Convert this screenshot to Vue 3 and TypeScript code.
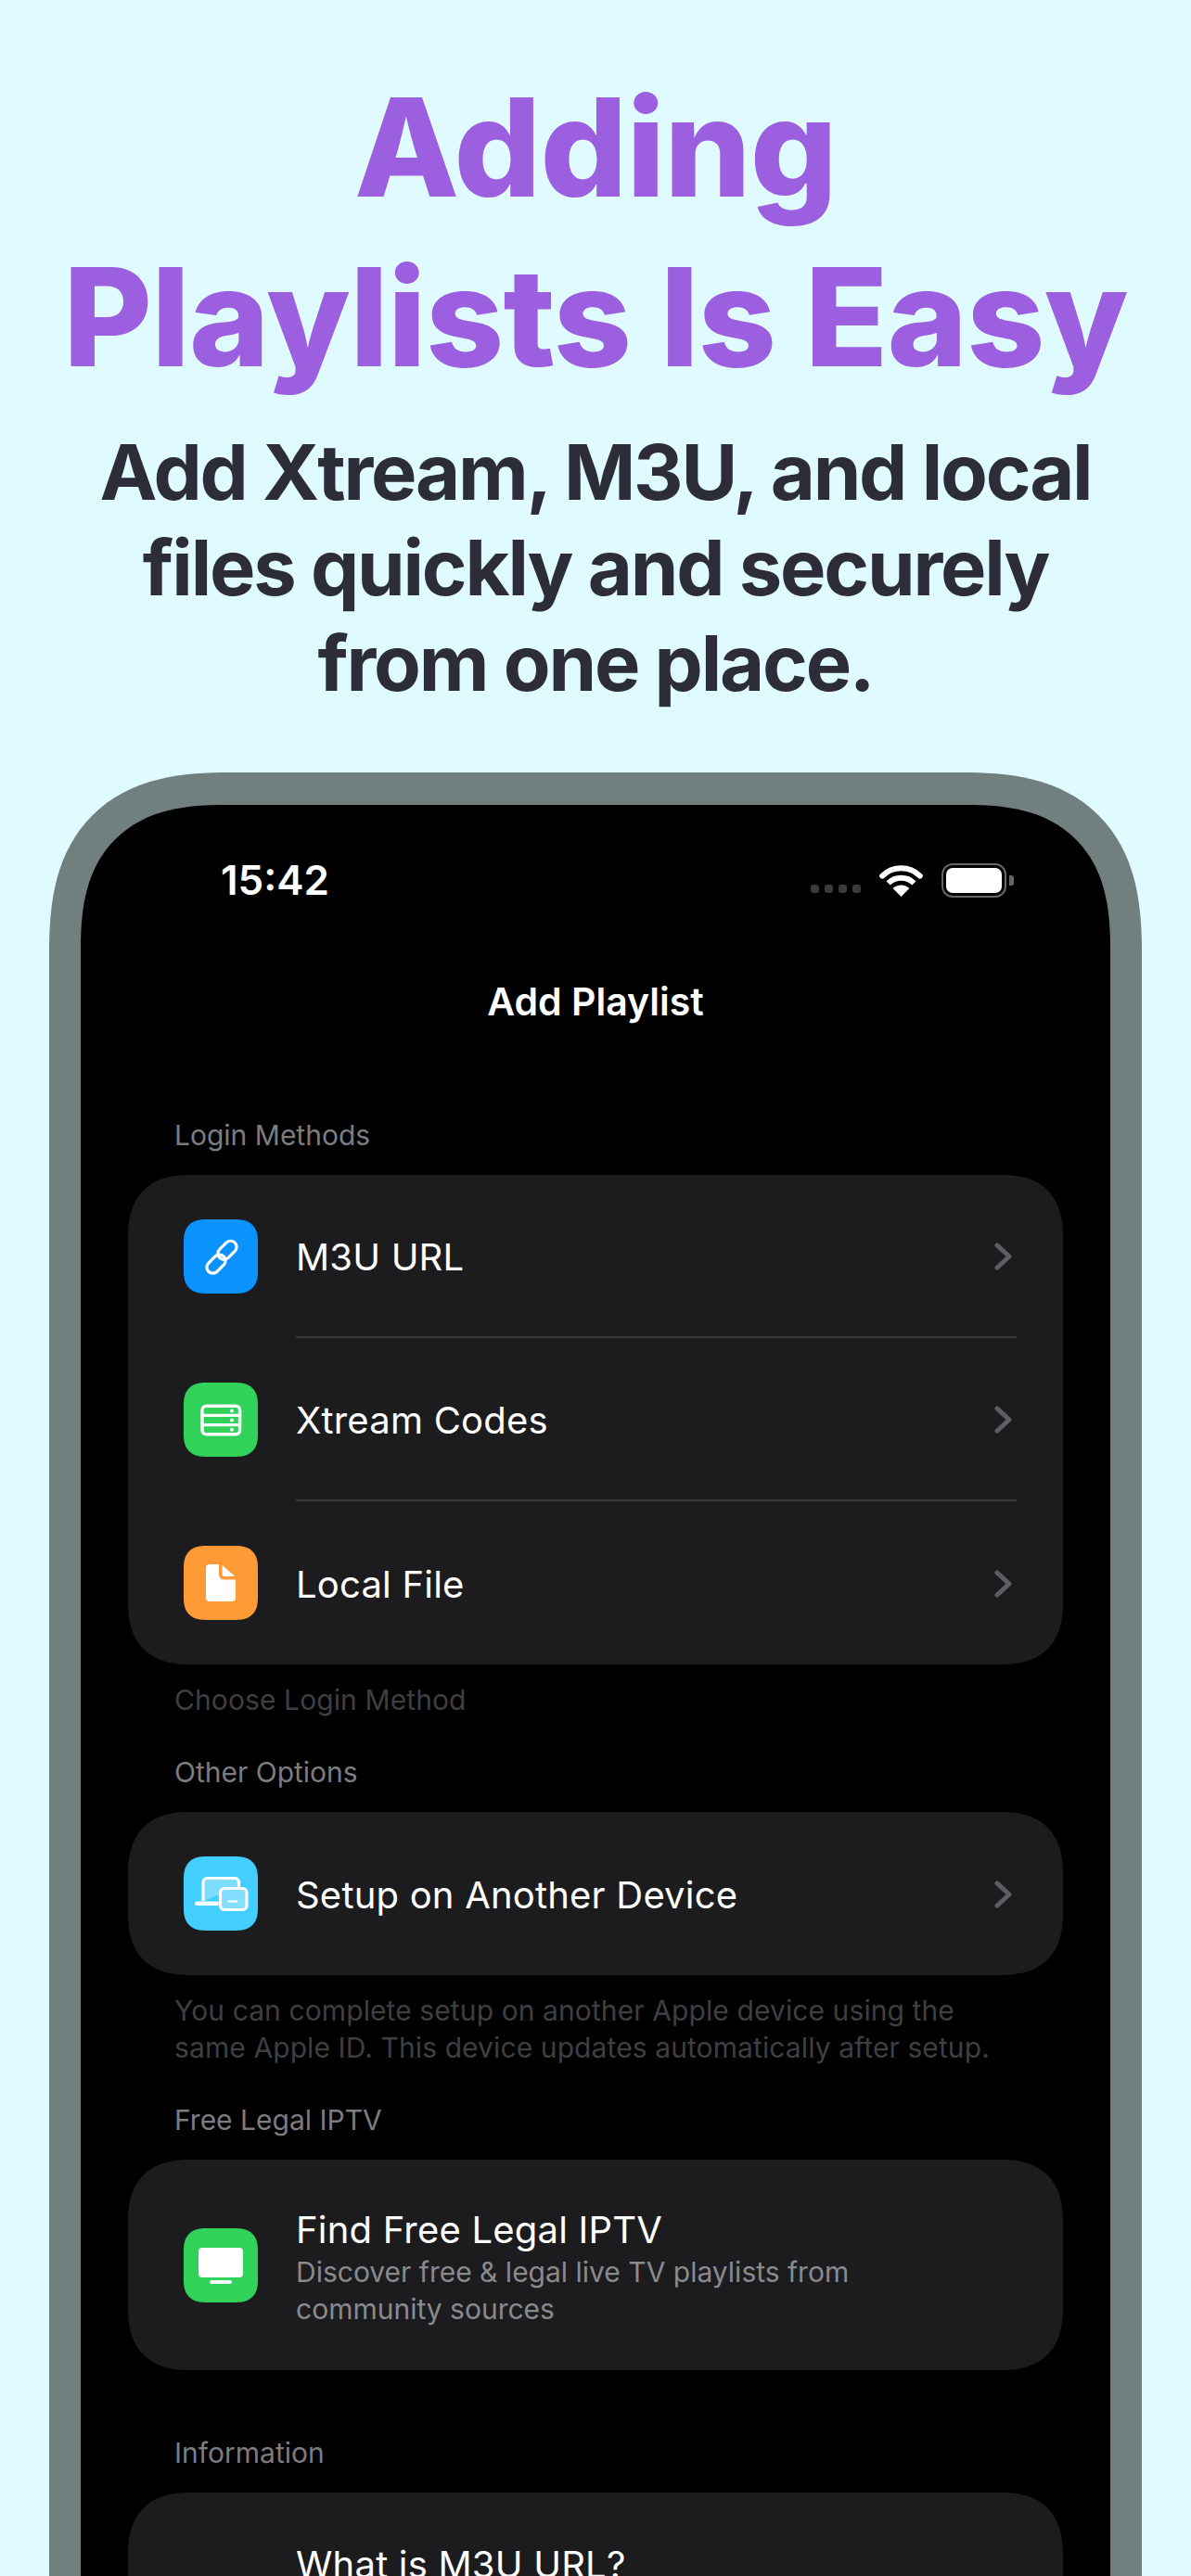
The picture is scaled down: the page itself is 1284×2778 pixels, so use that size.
<template>
  <div class="page">
    <h1 class="headline">Adding<br />Playlists Is Easy</h1>
    <p class="subhead">Add Xtream, M3U, and local<br />files quickly and securely<br />from one place.</p>

    <div class="phone">
      <div class="screen">
        <div class="status">
          <span class="time">15:42</span>
          <div class="status-right">
            <div class="dots"><i></i><i></i><i></i><i></i></div>
            <svg class="wifi" width="47" height="35" viewBox="0 0 47 35">
              <path d="M23.5 35 L14.6 26 A13 13 0 0 1 32.4 26 Z" fill="#fff" />
              <path d="M9.6 20.4 A20 20 0 0 1 37.4 20.4" fill="none" stroke="#fff" stroke-width="6" />
              <path d="M3.2 12.6 A29 29 0 0 1 43.8 12.6" fill="none" stroke="#fff" stroke-width="6" stroke-linecap="round" />
            </svg>
            <div class="battery"><div class="battery-fill"></div></div>
            <div class="battery-cap"></div>
          </div>
        </div>

        <div class="title">Add Playlist</div>

        <section class="section first">
          <div class="label">Login Methods</div>
          <div class="card">
            <div v-for="item in loginMethods" :key="item.name" class="row">
              <div class="icon" :class="item.color">
                <svg width="80" height="80" viewBox="0 0 80 80" v-html="item.svg"></svg>
              </div>
              <div class="row-body">
                <span class="row-name">{{ item.name }}</span>
                <svg class="chevron" width="19" height="30" viewBox="0 0 19 30"><path d="M3 3 L16 15 L3 27" /></svg>
              </div>
            </div>
          </div>
          <div class="note">Choose Login Method</div>
        </section>

        <section class="section">
          <div class="label">Other Options</div>
          <div class="card">
            <div class="row single">
              <div class="icon cyan">
                <svg width="80" height="80" viewBox="0 0 80 80" v-html="deviceIcon"></svg>
              </div>
              <div class="row-body">
                <span class="row-name">Setup on Another Device</span>
                <svg class="chevron" width="19" height="30" viewBox="0 0 19 30"><path d="M3 3 L16 15 L3 27" /></svg>
              </div>
            </div>
          </div>
          <div class="note">You can complete setup on another Apple device using the<br />same Apple ID. This device updates automatically after setup.</div>
        </section>

        <section class="section">
          <div class="label">Free Legal IPTV</div>
          <div class="card">
            <div class="row tall">
              <div class="icon green">
                <svg width="80" height="80" viewBox="0 0 80 80">
                  <rect x="16" y="21" width="48" height="32" rx="4" fill="#fff" />
                  <rect x="28" y="56" width="24" height="4" rx="2" fill="#fff" />
                </svg>
              </div>
              <div class="row-text">
                <div class="row-name">Find Free Legal IPTV</div>
                <div class="row-sub">Discover free &amp; legal live TV playlists from<br />community sources</div>
              </div>
            </div>
          </div>
        </section>

        <section class="section info">
          <div class="label">Information</div>
          <div class="card info-card">
            <div class="row-name">What is M3U URL?</div>
          </div>
        </section>
      </div>
    </div>
  </div>
</template>

<script setup lang="ts">
interface Method {
  name: string
  color: string
  svg: string
}

const loginMethods: Method[] = [
  {
    name: 'M3U URL',
    color: 'blue',
    svg: `<g transform="translate(41 40.7) rotate(-45)" fill="none" stroke="#fff" stroke-width="3.2">
      <rect x="-2" y="-7.5" width="23" height="13" rx="6.5" />
      <rect x="-21" y="-5.5" width="23" height="13" rx="6.5" />
    </g>`
  },
  {
    name: 'Xtream Codes',
    color: 'green',
    svg: `<g fill="none" stroke="#fff" stroke-width="3.4">
      <rect x="20" y="25.2" width="40.6" height="30.6" rx="4.5" />
      <path d="M20 35.4 H60.6 M20 45.6 H60.6" />
    </g>
    <circle cx="52" cy="30.4" r="2" fill="#fff" />
    <circle cx="52" cy="40.5" r="2" fill="#fff" />
    <circle cx="52" cy="50.7" r="2" fill="#fff" />`
  },
  {
    name: 'Local File',
    color: 'orange',
    svg: `<path fill="#fff" d="M28 20 H38 V31 a5.5 5.5 0 0 0 5.5 5.5 H56 V56 a4 4 0 0 1 -4 4 H28 a4 4 0 0 1 -4 -4 V24 a4 4 0 0 1 4 -4 Z" />
    <path fill="#fff" d="M41.5 20.8 L55.2 33 H44 a2.5 2.5 0 0 1 -2.5 -2.5 Z" />`
  }
]

const deviceIcon = `<path d="M21 48 V28 a4.5 4.5 0 0 1 4.5 -4.5 H55 a4.5 4.5 0 0 1 4.5 4.5 V33" fill="#ffffff" fill-opacity="0.3" stroke="#fff" stroke-width="3.2" />
  <rect x="12" y="48.5" width="26" height="4.6" rx="2.3" fill="#fff" />
  <rect x="39.5" y="34.5" width="28.5" height="23" rx="4.5" fill="#84dfff" stroke="#fff" stroke-width="3.2" />
  <rect x="47.5" y="47.6" width="11" height="2" rx="1" fill="#fff" />`
</script>

<style>
html,
body {
  margin: 0;
  background: #e0fbff;
}
</style>

<style scoped>
.page {
  width: 1284px;
  height: 2778px;
  overflow: hidden;
  background: #e0fbff;
  font-family: Inter, "Liberation Sans", sans-serif;
  text-align: center;
}

.headline {
  margin: 0;
  padding-top: 67px;
  font-size: 147px;
  line-height: 183px;
  font-weight: 800;
  letter-spacing: -0.8px;
  color: #9b5fe0;
}

.subhead {
  margin: 25px 0 0;
  font-size: 83px;
  line-height: 103px;
  font-weight: 700;
  letter-spacing: -2.2px;
  color: #2d2d3a;
}

.phone {
  margin: 66px 53px 0;
  padding: 35px 34px 0;
  height: 2100px;
  box-sizing: border-box;
  background: #717f7f;
  border-radius: 195px 195px 0 0;
  corner-shape: superellipse(1.35);
}

.screen {
  height: 100%;
  padding: 0 51px;
  background: #000;
  border-radius: 156px 156px 0 0;
  corner-shape: superellipse(1.35);
  text-align: left;
  color: #fff;
}

.status {
  height: 162px;
  margin: 0 -51px;
  display: flex;
  align-items: center;
  justify-content: space-between;
}

.time {
  margin-left: 151px;
  font-size: 44px;
  font-weight: 600;
}

.status-right {
  display: flex;
  align-items: center;
  margin-right: 104px;
}

.dots {
  display: flex;
  gap: 6px;
  margin: 18px 20px 0 0;
}

.dots i {
  width: 9px;
  height: 9px;
  border-radius: 3px;
  background: #3a3a3a;
}

.wifi {
  margin-right: 20px;
}

.battery {
  width: 70px;
  height: 37px;
  box-sizing: border-box;
  padding: 3px;
  border: 2px solid #666;
  border-radius: 12px;
}

.battery-fill {
  height: 100%;
  background: #fff;
  border-radius: 7px;
}

.battery-cap {
  width: 5px;
  height: 11px;
  margin-left: 3px;
  background: #666;
  border-radius: 0 3px 3px 0;
}

.title {
  margin-top: 20px;
  font-size: 41px;
  line-height: 60px;
  font-weight: 600;
  text-align: center;
}

.section {
  margin-top: 38px;
}

.section.first {
  margin-top: 94px;
}

.section.info {
  margin-top: 69px;
}

.label,
.note {
  padding-left: 50px;
  font-size: 30px;
  line-height: 40px;
}

.label {
  margin-bottom: 23px;
  color: #7c7c81;
}

.note {
  margin-top: 18px;
  letter-spacing: 0.1px;
  color: #3f3f42;
}

.card {
  background: #1c1c1e;
  border-radius: 68px;
  corner-shape: superellipse(1.3);
}

.row {
  display: flex;
  align-items: center;
  padding-left: 60px;
}

.row.tall {
  height: 227px;
}

.icon {
  flex: none;
  width: 80px;
  height: 80px;
  border-radius: 24px;
  corner-shape: superellipse(1.3);
}

.icon svg {
  display: block;
}

.blue {
  background: #0a93ff;
}

.green {
  background: #31d259;
}

.orange {
  background: #ff9a36;
}

.cyan {
  background: #42cfff;
}

.row-body {
  flex: 1;
  height: 176px;
  margin: 0 50px 0 41px;
  display: flex;
  align-items: center;
  justify-content: space-between;
  box-sizing: border-box;
  border-bottom: 2px solid #38383a;
}

.row:last-child .row-body {
  border-bottom: 0;
}

.row-name {
  padding-top: 4px;
  font-size: 40px;
  line-height: 50px;
  letter-spacing: 0.2px;
  color: #fff;
}

.chevron {
  margin: 2px 5px 0 0;
  fill: none;
  stroke: #5e5e62;
  stroke-width: 5;
  stroke-linecap: round;
  stroke-linejoin: round;
}

.row-text {
  margin-left: 41px;
}

.row-sub {
  font-size: 30px;
  line-height: 40px;
  color: #8a8a8e;
}

.info-card {
  height: 300px;
  padding: 49px 0 0 181px;
}
</style>
